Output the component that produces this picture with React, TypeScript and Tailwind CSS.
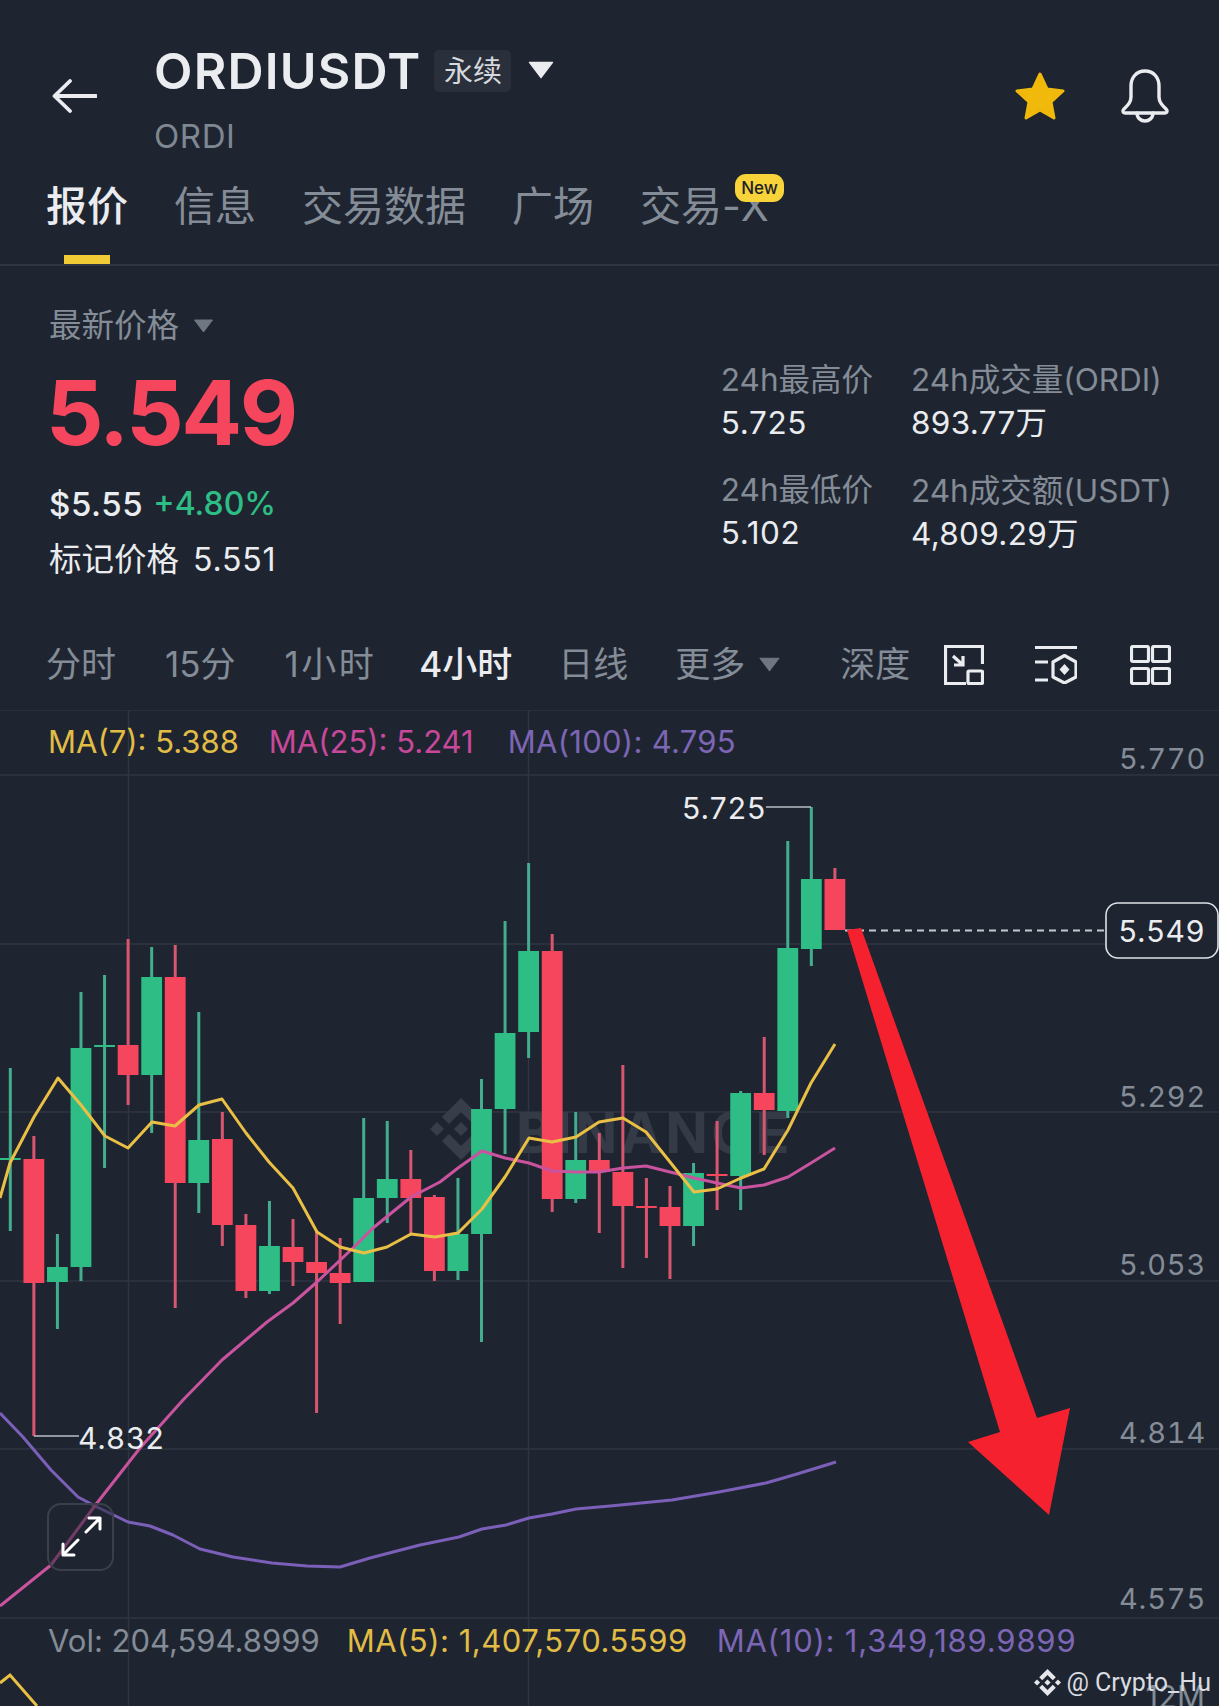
import React from "react";

type Candle = [number, number, number, number, "r" | "g"];

// wick top, body top, body bottom, wick bottom
const candles: Candle[] = [
  [1068, 1158, 1160, 1231, "g"],
  [1136, 1159, 1283, 1436, "r"],
  [1234, 1267, 1282, 1329, "g"],
  [992, 1048, 1267, 1281, "g"],
  [975, 1045, 1047, 1168, "g"],
  [939, 1045, 1075, 1105, "r"],
  [947, 977, 1075, 1133, "g"],
  [945, 977, 1183, 1308, "r"],
  [1012, 1140, 1183, 1213, "g"],
  [1112, 1139, 1225, 1246, "r"],
  [1214, 1225, 1291, 1298, "r"],
  [1201, 1246, 1291, 1294, "g"],
  [1219, 1247, 1262, 1286, "r"],
  [1232, 1262, 1273, 1413, "r"],
  [1238, 1273, 1283, 1324, "r"],
  [1118, 1198, 1282, 1282, "g"],
  [1121, 1179, 1198, 1223, "g"],
  [1150, 1179, 1198, 1233, "r"],
  [1195, 1197, 1271, 1281, "r"],
  [1178, 1234, 1271, 1280, "g"],
  [1079, 1109, 1234, 1342, "g"],
  [921, 1033, 1109, 1154, "g"],
  [863, 951, 1032, 1058, "g"],
  [934, 951, 1199, 1212, "r"],
  [1112, 1160, 1199, 1203, "g"],
  [1133, 1160, 1172, 1233, "r"],
  [1065, 1172, 1206, 1268, "r"],
  [1178, 1206, 1208, 1258, "r"],
  [1186, 1207, 1226, 1279, "r"],
  [1163, 1173, 1226, 1246, "g"],
  [1121, 1174, 1176, 1210, "r"],
  [1091, 1093, 1176, 1210, "g"],
  [1037, 1093, 1110, 1155, "r"],
  [841, 948, 1111, 1118, "g"],
  [807, 879, 949, 966, "g"],
  [868, 879, 930, 930, "r"],
];

const candleX = (i: number) => 10.3 + i * 23.56;

const ma7 =
  "0,1198 10,1163 34,1117 58,1078 81,1105 105,1136 128,1148 152,1122 175,1126 199,1105 222,1099 246,1133 269,1162 293,1188 317,1232 340,1247 364,1253 387,1247 411,1234 435,1237 458,1233 482,1209 505,1177 529,1138 552,1142 576,1137 599,1122 623,1118 646,1132 670,1162 694,1192 717,1189 741,1178 764,1169 788,1130 811,1083 835,1044";
const ma25 =
  "0,1606 51,1565 97,1503 140,1448 183,1400 222,1360 267,1322 293,1303 317,1282 353,1248 373,1228 411,1197 440,1182 458,1168 482,1151 505,1158 529,1163 552,1171 576,1172 599,1172 623,1168 646,1166 670,1172 694,1178 717,1183 741,1188 764,1185 788,1177 811,1163 835,1148";
const ma100 =
  "0,1413 23,1437 51,1470 78,1497 97,1507 128,1522 150,1526 173,1535 200,1549 233,1557 272,1563 307,1566 340,1567 370,1558 420,1545 459,1537 482,1529 506,1525 529,1518 552,1514 576,1509 610,1506 672,1500 719,1492 766,1483 797,1474 836,1462";

const gridY = [775, 944, 1112, 1281, 1449, 1618];
const axis: [string, number][] = [
  ["5.770", 758],
  ["5.292", 1096],
  ["5.053", 1264],
  ["4.814", 1432],
  ["4.575", 1598],
];

const tabs = ["信息", "交易数据", "广场"];

function Triangle({ className }: { className: string }) {
  return (
    <svg viewBox="0 0 20 14" className={className} fill="currentColor">
      <path d="M1 1h18L10 13z" strokeLinejoin="round" stroke="currentColor" />
    </svg>
  );
}

function BinanceMark() {
  return (
    <g>
      <path d="M38.73 53.2l24.59-24.58 24.6 24.6 14.3-14.31L63.32 0 24.42 38.9z" />
      <path d="M0 63.31l14.3-14.31 14.31 14.31-14.31 14.3z" />
      <path d="M38.73 73.41l24.59 24.59 24.6-24.6 14.31 14.29-38.9 38.91-38.91-38.88-.02-.02z" />
      <path d="M98 63.31l14.3-14.31 14.31 14.3-14.31 14.32z" />
      <path d="M77.83 63.3L63.32 48.78 52.59 59.51l-1.24 1.23-2.54 2.54 14.51 14.5 14.51-14.47z" />
    </g>
  );
}

function Chart() {
  return (
    <svg viewBox="0 711 1219 995" className="absolute inset-0 h-full w-full" fontFamily="Inter, 'Noto Sans CJK SC', sans-serif">
      {gridY.map((y) => (
        <line key={y} x1="0" x2="1219" y1={y} y2={y} stroke="#2f3641" strokeWidth="1.5" />
      ))}
      <line x1="128.5" x2="128.5" y1="711" y2="1706" stroke="#2f3641" strokeWidth="1.5" />
      <line x1="528.5" x2="528.5" y1="711" y2="1706" stroke="#2f3641" strokeWidth="1.5" />

      {/* watermark sits under the candles */}
      <g transform="translate(430 1098) scale(0.49)" fill="#383e49">
        <BinanceMark />
      </g>
      <text x="516" y="1153" fontSize="56" fontWeight="700" letterSpacing="3" fill="#353b46">
        BINANCE
      </text>

      {candles.map(([wt, bt, bb, wb, side], i) => {
        const x = candleX(i);
        const body = side === "g" ? "#2ebd85" : "#f6465d";
        const wick = side === "g" ? "#45ad8f" : "#d9566f";
        return (
          <g key={i}>
            <line x1={x} x2={x} y1={wt} y2={wb} stroke={wick} strokeWidth="3" />
            <rect x={x - 10.4} y={bt} width="20.8" height={bb - bt} fill={body} />
          </g>
        );
      })}

      <polyline points={ma100} fill="none" stroke="#7b5fb8" strokeWidth="3" strokeLinejoin="round" />
      <polyline points={ma25} fill="none" stroke="#c9539f" strokeWidth="3" strokeLinejoin="round" />
      <polyline points={ma7} fill="none" stroke="#eabf45" strokeWidth="3" strokeLinejoin="round" />
      <polyline points="0,1683 10,1675 37,1706" fill="none" stroke="#eabf45" strokeWidth="3" />

      {/* high and low markers */}
      <polyline points="766,807 811,807" fill="none" stroke="#b9bec5" strokeWidth="1.5" />
      <text x="682" y="819" fontSize="30" fill="#eaecef" letterSpacing="1">
        5.725
      </text>
      <polyline points="34,1436 79,1436" fill="none" stroke="#b9bec5" strokeWidth="1.5" />
      <text x="78" y="1449" fontSize="30" fill="#eaecef" letterSpacing="1">
        4.832
      </text>

      <line x1="845" x2="1106" y1="930.5" y2="930.5" stroke="#c4c8ce" strokeWidth="1.8" strokeDasharray="7 5" />
      <rect x="1106" y="903" width="112" height="55" rx="12" fill="#1e2530" stroke="#dfe2e6" strokeWidth="1.6" />
      <text x="1162" y="942" fontSize="30" textAnchor="middle" fill="#eaecef" letterSpacing="1">
        5.549
      </text>

      {axis.map(([label, y]) => (
        <text key={label} x="1206" y={y + 10.5} fontSize="29" textAnchor="end" fill="#848c97" letterSpacing="0.8" className="tabular-nums">
          {label}
        </text>
      ))}

      <polygon
        points="847,930 861,928 1037,1418 1070,1408 1049,1515 968,1442 1000,1432"
        fill="#f6212f"
      />
    </svg>
  );
}

export default function App() {
  return (
    <div className="flex h-[1706px] w-[1219px] flex-col overflow-hidden bg-[#1e2530] font-[Inter,'Noto_Sans_CJK_SC',sans-serif] text-[#eaecef]">
      {/* header */}
      <div className="flex h-[165px] items-start pl-[52px] pr-[49px] pt-[45px]">
        <svg viewBox="0 0 45 34" className="mt-[34px] h-[34px] w-[45px]" fill="none" stroke="#eaecef" strokeWidth="3.8" strokeLinecap="round" strokeLinejoin="round">
          <path d="M44 17H3M18 2 2.5 17 18 32" />
        </svg>
        <div className="ml-[57px] flex flex-col">
          <div className="flex items-center">
            <span className="text-[50px] font-semibold leading-[52px] tracking-[1.2px] text-[#eaecef]">ORDIUSDT</span>
            <span className="ml-[13px] flex h-[42px] w-[77px] items-center justify-center rounded-[5px] bg-[#2a303b] text-[29px] leading-none text-[#d5d8dc]">
              永续
            </span>
            <Triangle className="ml-[17px] mb-[3px] h-[18px] w-[26px] text-[#eaecef]" />
          </div>
          <span className="mt-[19px] text-[33px] leading-[40px] tracking-[0.6px] text-[#7f8792]">ORDI</span>
        </div>
        <div className="ml-auto mt-[24px] flex items-center gap-[54px]">
          <svg viewBox="0 0 52 50" className="h-[50px] w-[52px]" fill="#f0b90b" stroke="#f0b90b" strokeWidth="3" strokeLinejoin="round">
            <path d="M26 3l7 15 16 2-12 11 3 16-14-8-14 8 3-16L3 20l16-2z" />
          </svg>
          <svg viewBox="0 0 50 54" className="h-[54px] w-[50px]" fill="none" stroke="#eaecef" strokeWidth="3.4" strokeLinejoin="round" strokeLinecap="round">
            <path d="M25 2c-9 0-14 7-14 15v11c0 5-3 8-7 12-2 2-1 4 1 4h40c2 0 3-2 1-4-4-4-7-7-7-12V17c0-8-5-15-14-15z" />
            <path d="M17 44c0 5 4 8 8 8s8-3 8-8" />
          </svg>
        </div>
      </div>

      {/* tabs */}
      <div className="relative flex h-[101px] items-start gap-[46px] border-b-2 border-[#2f3641] pl-[46px] pt-[15px] text-[41px] leading-[52px] text-[#848c97]">
        <span className="relative font-medium text-[#eaecef]">
          报价
          <span className="absolute left-[18px] top-[75px] h-[9px] w-[46px] bg-[#f0cb35]" />
        </span>
        {tabs.map((t) => (
          <span key={t}>{t}</span>
        ))}
        <span className="relative">
          交易-X
          <span className="absolute left-[95px] top-[-6px] flex h-[28px] w-[49px] items-center justify-center rounded-[11px] bg-[#f8d33a] text-[17px] font-medium leading-none text-[#1e2329]">
            New
          </span>
        </span>
      </div>

      {/* price block */}
      <div className="flex h-[345px] justify-between pl-[49px] pr-[47px] pt-[38px]">
        <div className="flex flex-col">
          <div className="flex items-center text-[32.5px] leading-[44px] text-[#848c97]">
            最新价格
            <Triangle className="ml-[14px] h-[14px] w-[21px] text-[#6f7783]" />
          </div>
          <div className="-ml-[3px] mt-[12px] text-[90px] font-bold leading-[106px] tracking-[-2.4px] text-[#f6465d]">5.549</div>
          <div className="mt-[18px] flex items-center gap-[10px] font-medium leading-[40px]">
            <span className="text-[33px] tracking-[0.6px]">$5.55</span>
            <span className="text-[32px] text-[#2ebd85]">+4.80%</span>
          </div>
          <div className="mt-[16px] flex items-center gap-[14px] leading-[40px]">
            <span className="text-[32.5px]">标记价格</span>
            <span className="text-[32px] tracking-[0.8px]">5.551</span>
          </div>
        </div>
        <div className="flex gap-[38px] pt-[56px] text-[31.5px] leading-[40px]">
          <div className="flex flex-col">
            <span className="text-[#848c97]">24h最高价</span>
            <span className="mt-[3px] tracking-[0.6px]">5.725</span>
            <span className="mt-[27px] text-[#848c97]">24h最低价</span>
            <span className="mt-[3px] tracking-[0.6px]">5.102</span>
          </div>
          <div className="flex flex-col">
            <span className="text-[#848c97]">24h成交量(ORDI)</span>
            <span className="mt-[3px] tracking-[0.3px]">893.77万</span>
            <span className="mt-[28px] text-[#848c97]">24h成交额(USDT)</span>
            <span className="mt-[3px] tracking-[0.3px]">4,809.29万</span>
          </div>
        </div>
      </div>

      {/* interval row */}
      <div className="flex h-[99px] items-center pl-[46px] pt-[8px] text-[35px] leading-none text-[#848c97]">
        <span>分时</span>
        <span className="ml-[49px]">15分</span>
        <span className="ml-[49px] tracking-[2.5px]">1小时</span>
        <span className="ml-[43px] font-medium text-[#eaecef]">4小时</span>
        <span className="ml-[46px]">日线</span>
        <span className="ml-[47px]">更多</span>
        <Triangle className="ml-[14px] h-[15px] w-[21px] text-[#6f7783]" />
        <span className="ml-[60px]">深度</span>
        <svg viewBox="0 0 40 40" className="ml-[34px] h-[40px] w-[40px]" fill="none" stroke="#eaecef" strokeWidth="3.2">
          <path d="M22 38.5H1.5v-37h37V19" />
          <rect x="24" y="26" width="14.5" height="12.5" rx="1" />
          <path d="M9 11l10 9M19 11v9h-9" />
        </svg>
        <svg viewBox="0 0 42 38" className="ml-[51px] h-[38px] w-[42px]" fill="none" stroke="#eaecef" strokeWidth="3.2">
          <path d="M0 1.5h42M0 16h13M0 34h13" />
          <path d="M29.5 9.5 41 16v15l-11.5 6L18 31V16z" strokeLinejoin="round" />
          <path d="M29.5 18l5 5.5-5 5.5-5-5.5z" fill="#eaecef" stroke="none" />
        </svg>
        <svg viewBox="0 0 41 40" className="ml-[53px] h-[40px] w-[41px]" fill="none" stroke="#eaecef" strokeWidth="3.2">
          <rect x="1.5" y="1.5" width="17" height="15" rx="1.5" />
          <rect x="22.5" y="1.5" width="17" height="15" rx="1.5" />
          <rect x="1.5" y="23.5" width="17" height="15" rx="1.5" />
          <rect x="22.5" y="23.5" width="17" height="15" rx="1.5" />
        </svg>
      </div>

      {/* chart */}
      <div className="relative flex min-h-0 flex-1 flex-col border-t border-[#2a303b]">
        <Chart />
        <div className="relative flex h-[60px] items-center pl-[48px] text-[31px] leading-none">
          <span className="text-[#e2bd45]">MA(7): 5.388</span>
          <span className="ml-[30px] text-[#c8489a]">MA(25): 5.241</span>
          <span className="ml-[34px] tracking-[0.3px] text-[#7d66b5]">MA(100): 4.795</span>
        </div>
        <button className="absolute left-[47px] top-[792px] flex h-[68px] w-[67px] items-center justify-center rounded-[14px] border-2 border-[#3a404a] bg-[#1e2530]/50">
          <svg viewBox="0 0 44 44" className="h-[44px] w-[44px]" fill="none" stroke="#ffffff" strokeWidth="3" strokeLinecap="round" strokeLinejoin="round">
            <path d="M4 40 19 25M27 17 41 3M4 29v11h11M30 3h11v11" />
          </svg>
        </button>
        <div className="relative mt-[848px] flex items-center pl-[48px] text-[31px] leading-[44px]">
          <span className="text-[#848c97]">Vol: 204,594.8999</span>
          <span className="ml-[27px] tracking-[0.5px] text-[#e2bd45]">MA(5): 1,407,570.5599</span>
          <span className="ml-[29px] tracking-[0.8px] text-[#7d66b5]">MA(10): 1,349,189.9899</span>
        </div>
        <span className="absolute bottom-[-6px] right-[14px] text-[31px] leading-none text-[#848c97]">12M</span>
        <div className="absolute bottom-[10px] right-[8px] flex items-center gap-[5px] font-['Roboto',sans-serif] text-[25px] leading-none text-[#d9dce0]">
          <svg viewBox="0 0 126.61 126.61" className="h-[27px] w-[27px]" fill="#e4e6e9">
            <BinanceMark />
          </svg>
          <span>@ Crypto_Hu</span>
        </div>
      </div>
    </div>
  );
}
